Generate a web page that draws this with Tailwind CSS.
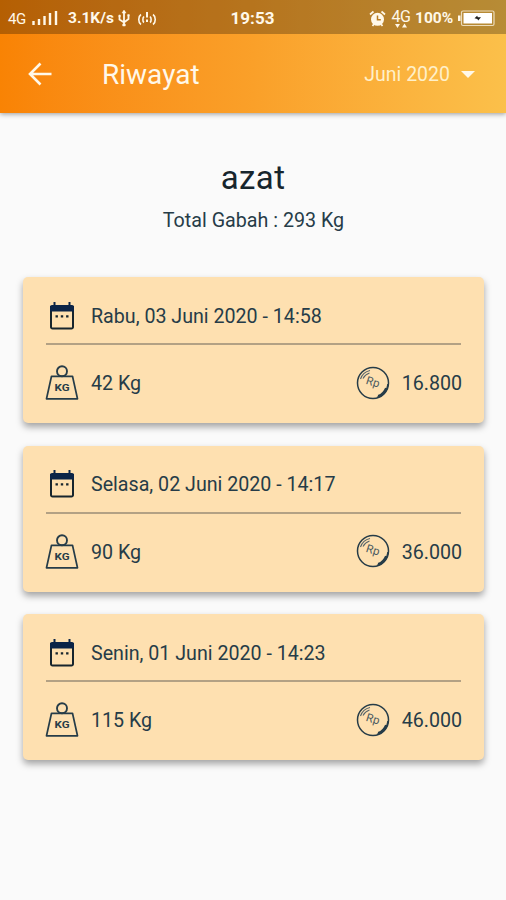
<!DOCTYPE html>
<html lang="id">
<head>
    <meta charset="UTF-8">
    <meta name="viewport" content="width=device-width, initial-scale=1.0">
    <title>Riwayat</title>
    <script src="https://cdn.jsdelivr.net/npm/@tailwindcss/browser@4"></script>
</head>
<body class="min-h-screen bg-[#fafafa] font-['Roboto',sans-serif] text-[#263c48]">

    <!-- Shared icons -->
    <svg class="hidden">
        <symbol id="calendar" viewBox="0 0 26 28">
            <path d="M2 5h22v20a1.500 1.500 0 0 1-1.500 1.500h-19A1.500 1.500 0 0 1 2 25z" fill="none" stroke="#17252d" stroke-width="2"/>
            <path d="M1 5a2 2 0 0 1 2-2h20a2 2 0 0 1 2 2v4.500H1z" fill="#0b2447"/>
            <path d="M5.500 0v4M20.500 0v4" stroke="#0b2447" stroke-width="2"/>
            <path d="M6.500 14.300h2.400M11.800 14.300h2.400M17.100 14.300h2.400" stroke="#17252d" stroke-width="2.200"/>
        </symbol>
        <symbol id="weight" viewBox="0 0 34 36">
            <circle cx="17" cy="6.300" r="5" fill="none" stroke="#263c48" stroke-width="1.900"/>
            <path d="M6.500 11.300h21l5 22.500h-31z" fill="none" stroke="#263c48" stroke-width="1.700" stroke-linejoin="round"/>
            <text x="17" y="26" text-anchor="middle" font-size="9.500" font-weight="700" textLength="15" lengthAdjust="spacingAndGlyphs" fill="#263c48">KG</text>
        </symbol>
        <symbol id="coin" viewBox="0 0 34 34">
            <circle cx="17" cy="17" r="15.500" fill="none" stroke="#263c48" stroke-width="1.500"/>
            <path d="M32 18a15.300 15.300 0 0 1-11 13.500M29.800 22a13.500 13.500 0 0 1-7.800 7.800" fill="none" stroke="#263c48" stroke-width="1.500"/>
            <path d="M4.500 13a13 13 0 0 1 9.500-8.500M7 12.500a11 11 0 0 1 6.500-5.500" fill="none" stroke="#56646a" stroke-width="1.100"/>
            <text x="16.700" y="20" text-anchor="middle" font-size="11.500" transform="rotate(17 17 17)" fill="#4b5a60">Rp</text>
        </symbol>
    </svg>

    <header class="h-[113px] bg-linear-to-r from-[#f98304] via-[#faa029] to-[#fbc04a] text-[#fff8e9] shadow-[0_1px_5px_rgba(0,0,0,0.4)]">
        <!-- Status bar -->
        <div class="grid h-[34px] grid-cols-[1fr_auto_1fr] items-center bg-black/27 pr-[11px] pl-2 pt-[3px] text-[15px] font-bold">
            <div class="flex items-center">
                <span class="w-5 pt-px text-[15px] font-normal tracking-[-0.5px]">4G</span>
                <svg class="ml-1 h-4 w-[27px]" viewBox="0 0 27 16" stroke="currentColor" stroke-width="2.400">
                    <path d="M1.500 14v-4M7 14V8M12.500 14V5M18 14V2M24 14V0"/>
                </svg>
                <span class="ml-[9px] w-[47px] text-[15.500px] whitespace-nowrap">3.1K/s</span>
                <svg class="ml-[3px] h-[17px] w-3" viewBox="0 0 12 17" fill="none" stroke="currentColor" stroke-width="1.800">
                    <path d="M6 1v14M1.500 6v3.500L6 12.500 10.500 9V5.500"/>
                    <path d="M6 0l2 3H4zM4.700 14h2.600v2H4.700zM.8 5h1.600v1.600H.8zM9.700 4.500h1.600v1.600H9.700z" fill="currentColor" stroke-width=".5"/>
                </svg>
                <svg class="ml-[7px] h-[14px] w-5" viewBox="0 0 20 14" fill="none" stroke="currentColor" stroke-width="1.600">
                    <path d="M4 2.500c-3 2-3 8 0 10M7 4.500c-1.500 1.500-1.500 5 0 6M16 2.500c3 2 3 8 0 10M13 4.500c1.500 1.500 1.500 5 0 6"/>
                    <path d="M10 0v5.500M10 7.500v2.500" stroke-width="2"/>
                </svg>
            </div>
            <span class="w-[45px] translate-x-px text-center text-[17px]">19:53</span>
            <div class="flex items-center justify-end">
                <svg class="h-[17px] w-[17px]" viewBox="0 0 17 17">
                    <circle cx="8.500" cy="9.300" r="6.500" fill="currentColor"/>
                    <path d="M1 4.500 4.500 1.500M16 4.500 12.500 1.500M3.500 16l1.500-2M13.500 16 12 14" stroke="currentColor" stroke-width="1.700"/>
                    <path d="M8.500 5.500v4.300h3.300" fill="none" stroke="#b97b20" stroke-width="1.500"/>
                </svg>
                <div class="ml-[5px] flex w-5 flex-col items-center">
                    <span class="text-[16px] leading-[13px] font-normal tracking-[-0.5px]">4G</span>
                    <svg class="h-[5px] w-3" viewBox="0 0 12 5" fill="currentColor"><path d="M0 1h5L2.500 5zM7 4.500h5L9.500 .5z"/></svg>
                </div>
                <span class="ml-1 w-[39px] text-[15.500px] whitespace-nowrap">100%</span>
                <svg class="ml-1 h-[17px] w-[37px]" viewBox="0 0 37 17">
                    <rect x="3.500" y="1" width="32.500" height="14.500" rx="1.500" fill="none" stroke="currentColor" stroke-opacity=".75" stroke-width="1.200"/>
                    <path d="M0 5.500h2.500v5.500H0z" fill="currentColor"/>
                    <path d="M5.500 3h28.500v10.500H5.500z" fill="white"/>
                    <path d="M16.500 8.200l2.700-2.400.6 1.500h3.200l-2.800 3.300-.8-1.500z" fill="#1d1d1d"/>
                </svg>
            </div>
        </div>

        <!-- App bar -->
        <div class="flex h-[79px] items-center pt-px pr-[31px] pl-[28px]">
            <svg class="h-6 w-6" viewBox="0 0 24 24" fill="none" stroke="currentColor" stroke-width="2.600">
                <path d="M23.500 12H2.500M12.500 1.500 2 12l10.500 10.500"/>
            </svg>
            <h1 class="ml-[50px] pt-0.5 text-[28px] leading-none">Riwayat</h1>
            <span class="ml-auto pt-0.5 text-[19.500px] text-[#fff0c9]">Juni 2020</span>
            <svg class="ml-[11px] h-[7px] w-[14px]" viewBox="0 0 14 7" fill="currentColor"><path d="M0 0h14L7 7z"/></svg>
        </div>
    </header>

    <main>
        <section class="pt-[45px] text-center">
            <h2 class="text-[33px] leading-[40px] tracking-[0.4px] text-[#17252d]">azat</h2>
            <p class="mt-[11px] pl-px text-[19.700px] leading-6">Total Gabah : 293 Kg</p>
        </section>

        <section class="mt-[44px] flex flex-col gap-[22.600px] pr-[22px] pl-[23px] text-[19.650px]">
            <article class="h-[146px] rounded-[5px] bg-[#fee0b0] px-[23px] shadow-[0_4px_7px_rgba(0,0,0,0.35)]">
                <div class="flex h-[68px] items-center border-b-2 border-[#b3a184] pt-[11px]">
                    <svg class="ml-[3px] h-7 w-[26px]"><use href="#calendar"/></svg>
                    <span class="ml-4 pt-0.5">Rabu, 03 Juni 2020 - 14:58</span>
                </div>
                <div class="flex h-[76px] items-center">
                    <svg class="-ml-px h-9 w-[34px]"><use href="#weight"/></svg>
                    <span class="ml-3 pt-0.5">42 Kg</span>
                    <svg class="mb-px ml-auto h-[34px] w-[34px]"><use href="#coin"/></svg>
                    <span class="-mr-px ml-3 pt-0.5">16.800</span>
                </div>
            </article>

            <article class="h-[146px] rounded-[5px] bg-[#fee0b0] px-[23px] shadow-[0_4px_7px_rgba(0,0,0,0.35)]">
                <div class="flex h-[68px] items-center border-b-2 border-[#b3a184] pt-[11px]">
                    <svg class="ml-[3px] h-7 w-[26px]"><use href="#calendar"/></svg>
                    <span class="ml-4 pt-0.5">Selasa, 02 Juni 2020 - 14:17</span>
                </div>
                <div class="flex h-[76px] items-center">
                    <svg class="-ml-px h-9 w-[34px]"><use href="#weight"/></svg>
                    <span class="ml-3 pt-0.5">90 Kg</span>
                    <svg class="mb-px ml-auto h-[34px] w-[34px]"><use href="#coin"/></svg>
                    <span class="-mr-px ml-3 pt-0.5">36.000</span>
                </div>
            </article>

            <article class="h-[146px] rounded-[5px] bg-[#fee0b0] px-[23px] shadow-[0_4px_7px_rgba(0,0,0,0.35)]">
                <div class="flex h-[68px] items-center border-b-2 border-[#b3a184] pt-[11px]">
                    <svg class="ml-[3px] h-7 w-[26px]"><use href="#calendar"/></svg>
                    <span class="ml-4 pt-0.5">Senin, 01 Juni 2020 - 14:23</span>
                </div>
                <div class="flex h-[76px] items-center">
                    <svg class="-ml-px h-9 w-[34px]"><use href="#weight"/></svg>
                    <span class="ml-3 pt-0.5">115 Kg</span>
                    <svg class="mb-px ml-auto h-[34px] w-[34px]"><use href="#coin"/></svg>
                    <span class="-mr-px ml-3 pt-0.5">46.000</span>
                </div>
            </article>
        </section>
    </main>

</body>
</html>
